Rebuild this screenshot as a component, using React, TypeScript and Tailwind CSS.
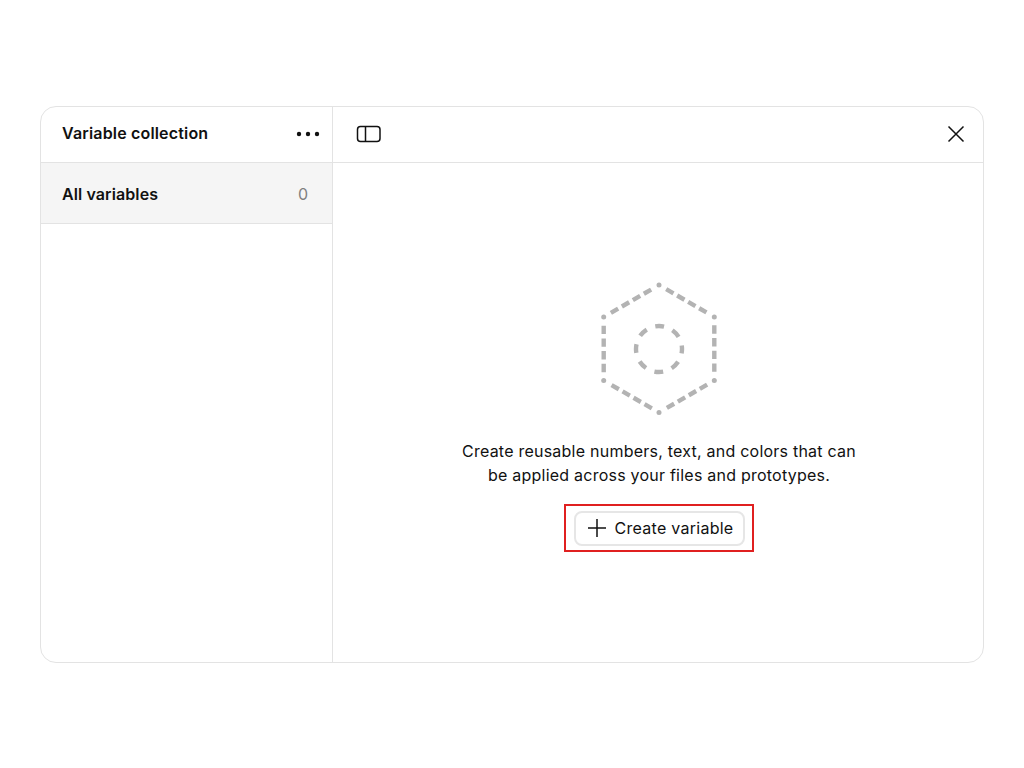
const hexEdges = [
  "M59 3L114.3 35",
  "M114.3 35V98.5",
  "M114.3 98.5L59 130.5",
  "M59 130.5L3.7 98.5",
  "M3.7 98.5V35",
  "M3.7 35L59 3",
];
const hexDots = [
  [59, 3],
  [114.3, 35],
  [114.3, 98.5],
  [59, 130.5],
  [3.7, 98.5],
  [3.7, 35],
];
const hexDash = "0 8.3 8.4 4.3 8.4 4.3 8.4 4.3 8.4 100";

export default function App() {
  return (
    <div className="h-[768px] w-[1024px] bg-white px-10 pt-[106px] text-[#111111] [font-family:Inter,sans-serif]">
      <div className="flex h-[557px] w-[944px] overflow-hidden rounded-2xl border border-[#e3e3e3]">
        <aside className="flex w-[292px] shrink-0 flex-col border-r border-[#e3e3e3]">
          <div className="flex h-[56px] shrink-0 items-center justify-between border-b border-[#e3e3e3] pb-[2px] pl-[21px] pr-3">
            <span className="pb-[2px] text-base font-semibold tracking-[0.17px]">Variable collection</span>
            <svg width="24" height="24" viewBox="0 0 24 24" fill="#111111">
              <circle cx="3" cy="12" r="2.2" />
              <circle cx="12" cy="12" r="2.2" />
              <circle cx="21" cy="12" r="2.2" />
            </svg>
          </div>
          <div className="flex h-[61px] shrink-0 items-center justify-between border-b border-[#e3e3e3] bg-[#f5f5f5] pl-[21px] pr-6 pt-[2px]">
            <span className="text-base font-semibold tracking-[0.1px]">All variables</span>
            <span className="text-base text-[#808080]">0</span>
          </div>
        </aside>
        <main className="flex min-w-0 flex-1 flex-col">
          <div className="flex h-[56px] shrink-0 items-center justify-between border-b border-[#e3e3e3] pb-[2px] pl-[23px] pr-4">
            <svg width="26" height="18" viewBox="0 0 26 18" fill="none" stroke="#111111" strokeWidth="1.5">
              <rect x="1.5" y="1.5" width="22.5" height="15" rx="3" />
              <path d="M9.5 1.5v15" />
            </svg>
            <svg width="22" height="22" viewBox="0 0 22 22" fill="none" stroke="#111111" strokeWidth="1.5">
              <path d="M3.5 3.5l15 15M18.5 3.5l-15 15" />
            </svg>
          </div>
          <div className="flex flex-1 flex-col items-center pl-0.5 pt-[119px]">
            <svg width="118" height="134" viewBox="0 0 118 134" fill="none" stroke="#b3b3b3" strokeWidth="4.4">
              {hexEdges.map((d) => (
                <path key={d} d={d} strokeDasharray={hexDash} />
              ))}
              {hexDots.map(([x, y]) => (
                <circle key={`${x}-${y}`} cx={x} cy={y} r="2.5" fill="#b3b3b3" stroke="none" />
              ))}
              <circle cx="59" cy="67" r="23" strokeDasharray="9 9.06" strokeDashoffset="4.5" />
            </svg>
            <p className="mt-[24px] text-center text-base leading-[23.5px] tracking-[0.23px]">
              Create reusable numbers, text, and colors that can
              <br />
              be applied across your files and prototypes.
            </p>
            <div className="mt-[17px] flex h-[48px] w-[190px] items-center justify-center border-2 border-[#e02020]">
              <button className="flex h-[35px] w-[171px] items-center justify-center gap-2 rounded-lg border-2 border-[#e6e6e6] bg-white pl-[2px] text-base tracking-[0.27px]">
                <svg width="20" height="20" viewBox="0 0 20 20" fill="none" stroke="#111111" strokeWidth="1.5">
                  <path d="M10 1v18M1 10h18" />
                </svg>
                Create variable
              </button>
            </div>
          </div>
        </main>
      </div>
    </div>
  );
}
